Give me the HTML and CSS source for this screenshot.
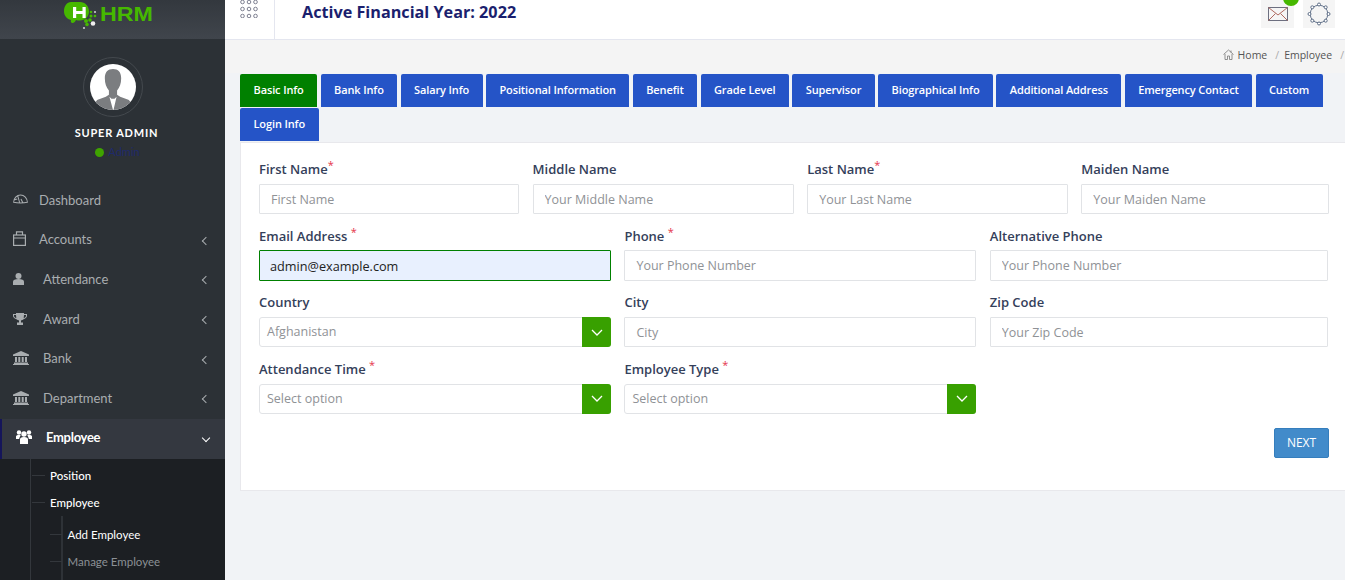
FILE: index.html
```html
<!DOCTYPE html>
<html>
<head>
    <meta charset="UTF-8">
    <title>HRM - Add Employee</title>
    <link rel="stylesheet" href="styles.css">
</head>
<body>
<div class="app">
    <!-- Sidebar -->
    <aside class="sidebar">
        <div class="logo">
            <svg width="94" height="32" viewBox="0 0 94 32">
                <path d="M9 1h9c5 0 9 4 9 9.500 0 5-4 9-9 9-1.500 0-3 0-4-.5-1 2-2.500 3.500-4 3-1-.3-1.500-1.500-1-3C5 18 2 15 2 10 2 5 5 1 9 1z" fill="#46b800"/>
                <rect x="11" y="6" width="3.200" height="11" fill="#fff"/>
                <rect x="20.500" y="6" width="3.200" height="11" fill="#fff"/>
                <rect x="11" y="10" width="12" height="3" fill="#fff"/>
                <circle cx="29" cy="11" r="1.300" fill="#46b800"/><circle cx="33" cy="11" r="1.100" fill="#ccc"/>
                <circle cx="29" cy="15" r="1.500" fill="#46b800"/><circle cx="33" cy="15" r="1.300" fill="#46b800"/>
                <circle cx="24" cy="20" r="2" fill="#46b800"/><circle cx="28" cy="19" r="1.800" fill="#46b800"/>
                <circle cx="31" cy="22.500" r="2.300" fill="#eee"/><circle cx="25" cy="23.500" r="1.800" fill="#46b800"/>
                <circle cx="22" cy="27" r="1.100" fill="#ccc"/>
                <text x="38" y="20" class="logo-text" textLength="53" lengthAdjust="spacingAndGlyphs">HRM</text>
            </svg>
        </div>
        <div class="profile">
            <div class="avatar-ring">
                <svg class="avatar" viewBox="0 0 45 45">
                    <circle cx="22.500" cy="22.500" r="22.500" fill="#fff"/>
                    <clipPath id="av"><circle cx="22.500" cy="22.500" r="22.500"/></clipPath>
                    <g clip-path="url(#av)">
                        <path d="M22.500 5c-5 0-8 3-8 9 0 5 1.500 9 4 12v4l-3 2-8 3c-2 1-3 4-3 10h36c0-6-1-9-3-10l-8-3-3-2v-4c2.500-3 4-7 4-12 0-6-3-9-8-9z" fill="#7b7d80"/>
                        <path d="M19 32l3.500 13h.5l3-13-2 2h-3z" fill="#fff"/>
                    </g>
                </svg>
            </div>
            <div class="profile-name">SUPER ADMIN</div>
            <div class="profile-role"><span class="dot"></span>Admin</div>
        </div>
        <ul class="menu">
            <li class="menu-item">
                <svg class="ico ico-dash" viewBox="0 0 16 10" fill="none" stroke="#a9adb0" stroke-width="1.100"><path d="M.7 8.500C.7 4 4 .7 8 .7s7.300 3.300 7.300 7.800c-2 .5-4.500.8-7.300.8S2.700 9 .7 8.500zM5 1.500L7 8.500M8.500 5l2 4M1 6l3.500-1"/></svg>
                <span class="menu-label">Dashboard</span>
            </li>
            <li class="menu-item">
                <svg class="ico ico-acct" viewBox="0 0 13 15" fill="none" stroke="#a9adb0" stroke-width="1.200"><rect x=".6" y="4" width="11.800" height="10.400"/><path d="M.6 7h11.800M3.500 4V.8h6V4"/></svg>
                <span class="menu-label">Accounts</span>
                <span class="chev"></span>
            </li>
            <li class="menu-item wide">
                <svg class="ico ico-user" viewBox="0 0 11 12" fill="#a9adb0"><circle cx="5.500" cy="3" r="3"/><path d="M0 12V8.500C0 7 2 6 5.500 6S11 7 11 8.500V12z"/></svg>
                <span class="menu-label">Attendance</span>
                <span class="chev"></span>
            </li>
            <li class="menu-item wide">
                <svg class="ico ico-award" viewBox="0 0 14 12" fill="#a9adb0"><path d="M3 0h8v1h3v2c0 1.500-2 3-3.500 3.300C10 7 8.500 7.300 8 7.500V9.500h2V12H4V9.500h2v-2c-.5-.2-2-.5-2.500-1.200C2 6 0 4.500 0 3V1h3zM1 2v1c0 .8 1 1.800 2.300 2.300L3 2zm12 0h-2l-.3 3.300C12 4.800 13 3.800 13 3z"/></svg>
                <span class="menu-label">Award</span>
                <span class="chev"></span>
            </li>
            <li class="menu-item wide">
                <svg class="ico ico-bank" viewBox="0 0 16 14" fill="#a9adb0"><path d="M8 0l8 3.500V5H0V3.500zM2 6h2v5H2zM5.300 6h2v5h-2zM8.700 6h2v5h-2zM12 6h2v5h-2zM1 11.500h14V13H1zM0 13h16v1H0z"/></svg>
                <span class="menu-label">Bank</span>
                <span class="chev"></span>
            </li>
            <li class="menu-item wide">
                <svg class="ico ico-bank" viewBox="0 0 16 14" fill="#a9adb0"><path d="M8 0l8 3.500V5H0V3.500zM2 6h2v5H2zM5.300 6h2v5h-2zM8.700 6h2v5h-2zM12 6h2v5h-2zM1 11.500h14V13H1zM0 13h16v1H0z"/></svg>
                <span class="menu-label">Department</span>
                <span class="chev"></span>
            </li>
            <li class="menu-item active">
                <svg class="ico ico-team" viewBox="0 0 16 14" fill="#fff"><circle cx="8" cy="4" r="2.700"/><circle cx="3" cy="2.500" r="2.200"/><circle cx="13" cy="2.500" r="2.200"/><path d="M4 14V9.500C4 8 5 7 8 7s4 1 4 2.500V14zM0 9V6.500C0 5.500 1 5 3 5c.7 0 1.400.1 1.700.3C4 6.500 3.300 8 3.200 9zM16 9V6.500C16 5.500 15 5 13 5c-.7 0-1.400.1-1.700.3.700 1.200 1.400 2.700 1.500 3.700z"/></svg>
                <span class="menu-label">Employee</span>
                <span class="chev down"></span>
            </li>
        </ul>
        <ul class="submenu">
            <li class="sub-item">Position</li>
            <li class="sub-item">Employee</li>
            <li>
                <ul class="submenu-inner">
                    <li class="inner-item current">Add Employee</li>
                    <li class="inner-item">Manage Employee</li>
                </ul>
            </li>
        </ul>
    </aside>

    <div class="main">
        <!-- Top bar -->
        <header class="topbar">
            <div class="apps">
                <svg width="18" height="18" viewBox="0 0 18 18" fill="none" stroke="#7d7f90" stroke-width="1">
                    <circle cx="2.500" cy="2" r="1.800"/><circle cx="9" cy="2" r="1.800"/><circle cx="15.500" cy="2" r="1.800"/>
                    <circle cx="2.500" cy="9" r="1.800"/><circle cx="9" cy="9" r="1.800"/><circle cx="15.500" cy="9" r="1.800"/>
                    <circle cx="2.500" cy="16" r="1.800"/><circle cx="9" cy="16" r="1.800"/><circle cx="15.500" cy="16" r="1.800"/>
                </svg>
            </div>
            <h1 class="fy-title">Active Financial Year: 2022</h1>
            <div class="top-actions">
                <div class="top-btn">
                    <svg width="20" height="14" viewBox="0 0 20 14" fill="none" stroke="#6d6f80" stroke-width="1"><rect x=".5" y=".5" width="19" height="13"/><path d="M.5.500L10 8l9.500-7.500M.5 13.500L7.500 6.500M19.500 13.500L12.500 6.500" stroke="#b06a60"/></svg>
                    <span class="badge"></span>
                </div>
                <div class="top-btn">
                    <svg width="24" height="24" viewBox="0 0 24 24" fill="none" stroke="#5f6f88" stroke-width="1"><circle cx="12" cy="12" r="8.800"/><circle cx="12" cy="2.500" r="1.500" fill="#fff"/><circle cx="12" cy="21.500" r="1.500" fill="#fff"/><circle cx="2.500" cy="12" r="1.500" fill="#fff"/><circle cx="21.500" cy="12" r="1.500" fill="#fff"/><circle cx="5.300" cy="5.300" r="1.500" fill="#fff"/><circle cx="18.700" cy="5.300" r="1.500" fill="#fff"/><circle cx="5.300" cy="18.700" r="1.500" fill="#fff"/><circle cx="18.700" cy="18.700" r="1.500" fill="#fff"/></svg>
                </div>
            </div>
        </header>

        <div class="breadcrumb">
            <svg width="11" height="11" viewBox="0 0 11 11" fill="none" stroke="#777" stroke-width=".8"><path d="M.5 5.500L5.500 1l5 4.500M2 5v5.500h2.500V7h2v3.500H9V5M8 1.500v2"/></svg>
            <span class="crumb">Home</span><span class="sep">/</span>
            <span class="crumb">Employee</span><span class="sep">/</span>
        </div>

        <div class="content">
            <nav class="tabs">
                <a class="tab selected">Basic Info</a>
                <a class="tab">Bank Info</a>
                <a class="tab">Salary Info</a>
                <a class="tab">Positional Information</a>
                <a class="tab">Benefit</a>
                <a class="tab">Grade Level</a>
                <a class="tab">Supervisor</a>
                <a class="tab">Biographical Info</a>
                <a class="tab">Additional Address</a>
                <a class="tab">Emergency Contact</a>
                <a class="tab">Custom</a>
                <a class="tab">Login Info</a>
            </nav>

            <form class="panel">
                <div class="row row-four">
                    <div class="field">
                        <label class="lbl">First Name<sup class="req">*</sup></label>
                        <input class="inp" type="text" placeholder="First Name">
                    </div>
                    <div class="field">
                        <label class="lbl">Middle Name</label>
                        <input class="inp" type="text" placeholder="Your Middle Name">
                    </div>
                    <div class="field">
                        <label class="lbl">Last Name<sup class="req">*</sup></label>
                        <input class="inp" type="text" placeholder="Your Last Name">
                    </div>
                    <div class="field">
                        <label class="lbl">Maiden Name</label>
                        <input class="inp" type="text" placeholder="Your Maiden Name">
                    </div>
                </div>
                <div class="row row-three row-contact">
                    <div class="field">
                        <label class="lbl">Email Address <sup class="req">*</sup></label>
                        <input class="inp filled" type="text" value="admin@example.com">
                    </div>
                    <div class="field">
                        <label class="lbl">Phone <sup class="req">*</sup></label>
                        <input class="inp" type="text" placeholder="Your Phone Number">
                    </div>
                    <div class="field">
                        <label class="lbl">Alternative Phone</label>
                        <input class="inp" type="text" placeholder="Your Phone Number">
                    </div>
                </div>
                <div class="row row-three">
                    <div class="field">
                        <label class="lbl">Country</label>
                        <div class="select"><span class="select-text">Afghanistan</span><span class="select-btn"><svg width="12" height="7" viewBox="0 0 12 7" fill="none" stroke="#fff" stroke-width="1.300"><path d="M1 1l5 5 5-5"/></svg></span></div>
                    </div>
                    <div class="field">
                        <label class="lbl">City</label>
                        <input class="inp" type="text" placeholder="City">
                    </div>
                    <div class="field">
                        <label class="lbl">Zip Code</label>
                        <input class="inp" type="text" placeholder="Your Zip Code">
                    </div>
                </div>
                <div class="row row-three">
                    <div class="field">
                        <label class="lbl">Attendance Time <sup class="req">*</sup></label>
                        <div class="select"><span class="select-text">Select option</span><span class="select-btn"><svg width="12" height="7" viewBox="0 0 12 7" fill="none" stroke="#fff" stroke-width="1.300"><path d="M1 1l5 5 5-5"/></svg></span></div>
                    </div>
                    <div class="field">
                        <label class="lbl">Employee Type <sup class="req">*</sup></label>
                        <div class="select"><span class="select-text">Select option</span><span class="select-btn"><svg width="12" height="7" viewBox="0 0 12 7" fill="none" stroke="#fff" stroke-width="1.300"><path d="M1 1l5 5 5-5"/></svg></span></div>
                    </div>
                </div>
                <div class="actions">
                    <button class="next" type="button">NEXT</button>
                </div>
            </form>
        </div>
    </div>
</div>
</body>
</html>
```

FILE: styles.css
```css
* {
    box-sizing: border-box;
}
html, body {
    margin: 0;
    height: 100%;
    overflow: hidden;
}
body {
    background-color: #f1f3f6;
    font-family: "Open Sans", sans-serif;
}
ul {
    list-style: none;
    margin: 0;
    padding: 0;
}
.app {
    display: flex;
    height: 580px;
}

/* sidebar */
.sidebar {
    width: 225px;
    flex-shrink: 0;
    height: 580px;
    overflow: hidden;
    background-color: #2c3136;
    font-family: Lato, sans-serif;
}
.logo {
    height: 39px;
    background: linear-gradient(#33383e, #40454c);
    padding: 1px 0 0 62px;
}
.logo-text {
    font-family: "Liberation Sans", sans-serif;
    font-weight: bold;
    font-size: 21px;
    fill: #46b800;
}
.profile {
    height: 141px;
    padding-top: 18px;
    display: flex;
    flex-direction: column;
    align-items: center;
}
.avatar-ring {
    width: 60px;
    height: 60px;
    border: 1px solid #44494e;
    border-radius: 50%;
    display: flex;
    align-items: center;
    justify-content: center;
}
.avatar {
    width: 46px;
    height: 46px;
}
.profile-name {
    margin-top: 8px;
    padding-left: 8px;
    color: #fff;
    font-size: 11px;
    font-weight: 700;
    letter-spacing: .8px;
    line-height: 16px;
}
.profile-role {
    margin-top: 4px;
    color: #1f2a6b;
    font-size: 11px;
    line-height: 14px;
    display: flex;
    align-items: center;
    padding-left: 10px;
}
.dot {
    width: 9px;
    height: 9px;
    border-radius: 50%;
    background-color: #3fa300;
    margin-right: 4px;
}
.menu-item {
    height: 39.600px;
    display: flex;
    align-items: center;
    padding-left: 13px;
    color: #a9adb0;
    font-size: 13px;
    position: relative;
}
.ico {
    flex-shrink: 0;
    margin-right: 11px;
}
.ico-dash {
    width: 15px;
    height: 10px;
    margin-top: -2px;
}
.ico-acct {
    width: 13px;
    height: 15px;
    margin-right: 13px;
    margin-top: -2px;
}
.ico-user {
    width: 11px;
    height: 12px;
    margin-right: 19px;
}
.ico-award {
    width: 14px;
    height: 12px;
    margin-right: 16px;
}
.ico-bank {
    width: 16px;
    height: 14px;
    margin-right: 14px;
}
.ico-team {
    width: 16px;
    height: 14px;
    margin-right: 14px;
}
.menu-label {
    flex: 1;
}
.chev {
    width: 6px;
    height: 6px;
    border-left: 1.500px solid #a9adb0;
    border-bottom: 1.500px solid #a9adb0;
    transform: rotate(45deg);
    margin-right: 16px;
    margin-top: 3px;
}
.chev.down {
    border-color: #fff;
    transform: rotate(-45deg);
    margin-top: 1px;
}
.menu-item.active {
    background-color: #343840;
    color: #fff;
    font-weight: 700;
    letter-spacing: -0.3px;
    border-left: 2px solid #15155a;
    padding-left: 14px;
    padding-bottom: 3px;
    height: 40px;
    margin-top: 1.400px;
}
.submenu {
    background-color: #1c1f23;
    height: 130px;
    padding-top: 3px;
    position: relative;
}
.submenu::before {
    content: "";
    position: absolute;
    left: 30px;
    top: 0;
    bottom: 0;
    width: 1px;
    background-color: #33373c;
}
.sub-item {
    height: 27px;
    line-height: 27px;
    padding-left: 50px;
    color: #fff;
    font-size: 11.500px;
    font-weight: 500;
    position: relative;
}
.sub-item::before,
.inner-item::before {
    content: "";
    position: absolute;
    left: 32px;
    top: 13px;
    width: 13px;
    height: 1px;
    background-color: #33373c;
}
.submenu-inner {
    position: relative;
    padding-top: 5px;
}
.submenu-inner::before {
    content: "";
    position: absolute;
    left: 61px;
    top: 0;
    bottom: -30px;
    width: 2px;
    background-color: #2e3237;
}
.inner-item {
    height: 27px;
    line-height: 27px;
    padding-left: 67.500px;
    color: #8b9095;
    font-size: 11.500px;
    position: relative;
}
.inner-item::before {
    left: 50px;
    width: 12px;
}
.inner-item.current {
    color: #fff;
}

/* top bar */
.main {
    flex: 1;
    min-width: 0;
}
.topbar {
    height: 40px;
    background-color: #fff;
    border-bottom: 1px solid #e4e6ef;
    display: flex;
    align-items: flex-start;
}
.apps {
    width: 50px;
    height: 39px;
    border-right: 1px solid #e4e6ef;
    padding-left: 15px;
    margin-right: 27px;
}
.fy-title {
    margin: 0;
    color: #1b1f6e;
    font-size: 16.200px;
    font-weight: 700;
    line-height: 24px;
    flex: 1;
}
.top-actions {
    display: flex;
    gap: 9px;
    margin-right: 10px;
}
.top-btn {
    width: 33px;
    height: 28px;
    background-color: #f5f5f5;
    display: flex;
    align-items: center;
    justify-content: center;
    position: relative;
}
.top-btn:last-child {
    width: 32px;
}
.badge {
    position: absolute;
    top: -10px;
    right: -5px;
    width: 16px;
    height: 16px;
    border-radius: 50%;
    background-color: #46b800;
}

/* breadcrumb */
.breadcrumb {
    height: 33px;
    background-color: #f4f4f4;
    display: flex;
    align-items: center;
    justify-content: flex-end;
    font-size: 10.500px;
    color: #555;
    padding-bottom: 4px;
}
.crumb {
    margin-left: 4px;
}
.sep {
    color: #aaa;
    margin-left: 8px;
    padding-right: 1px;
}

/* tabs + form */
.content {
    padding: 1px 0 0 15px;
}
.tabs {
    display: flex;
    flex-wrap: wrap;
    row-gap: 1px;
    column-gap: 3.300px;
    padding-right: 10px;
}
.tab {
    height: 33px;
    line-height: 31px;
    padding: 0 13.500px;
    background-color: #2554c7;
    color: #fff;
    font-size: 11px;
    font-weight: 600;
    border-radius: 2px 2px 0 0;
    letter-spacing: -0.12px;
    white-space: nowrap;
}
.tab.selected {
    background-color: #008000;
}
.panel {
    background-color: #fff;
    border: 1px solid #e8e8ec;
    border-right: 0;
    height: 349px;
    margin-top: 1px;
    padding: 15.600px 16px 0 18px;
}
.row {
    display: grid;
    margin-bottom: 11.200px;
}
.row-four {
    column-gap: 13.600px;
    grid-template-columns: 260px 261px 260.500px 248px;
}
.row-four .inp {
    padding-top: 1px;
}
.row-three {
    column-gap: 13.400px;
    grid-template-columns: 352px 352px 338px;
}
.row-contact .lbl {
    padding-top: 1px;
}
.field {
    min-width: 0;
}
.lbl {
    display: block;
    height: 25px;
    line-height: 21px;
    font-size: 13px;
    font-weight: 600;
    color: #34405a;
}
.req {
    color: #e5344c;
    font-size: 11px;
    line-height: 0;
    font-weight: 400;
}
.inp {
    display: block;
    width: 100%;
    height: 30.500px;
    border: 1px solid #e1e3e6;
    border-radius: 1px;
    padding: 0 11px;
    font-family: "Open Sans", sans-serif;
    font-size: 12.500px;
    color: #222;
    background-color: #fff;
    outline: none;
}
.inp::placeholder {
    color: #8f9296;
    opacity: 1;
}
.inp.filled {
    border-color: #008000;
    background-color: #e8f0fe;
    font-size: 12.700px;
    padding-left: 10px;
}
.select {
    height: 30.500px;
    border: 1px solid #e1e3e6;
    border-radius: 3px;
    display: flex;
    align-items: center;
    justify-content: space-between;
    font-size: 12.500px;
    color: #8f9296;
    padding-left: 7px;
}
.select-text {
    padding-bottom: 1px;
}
.select-btn {
    width: 29px;
    height: 30.500px;
    margin-right: -1px;
    background-color: #38a000;
    border-radius: 0 3px 3px 0;
    display: flex;
    align-items: center;
    justify-content: center;
}
.actions {
    display: flex;
    justify-content: flex-end;
    margin-top: 13.800px;
}
.next {
    width: 55px;
    height: 30px;
    background-color: #428bca;
    border: 1px solid #357ebd;
    border-radius: 2px;
    color: #fff;
    font-family: "Open Sans", sans-serif;
    font-size: 12px;
    padding: 0;
}
```
